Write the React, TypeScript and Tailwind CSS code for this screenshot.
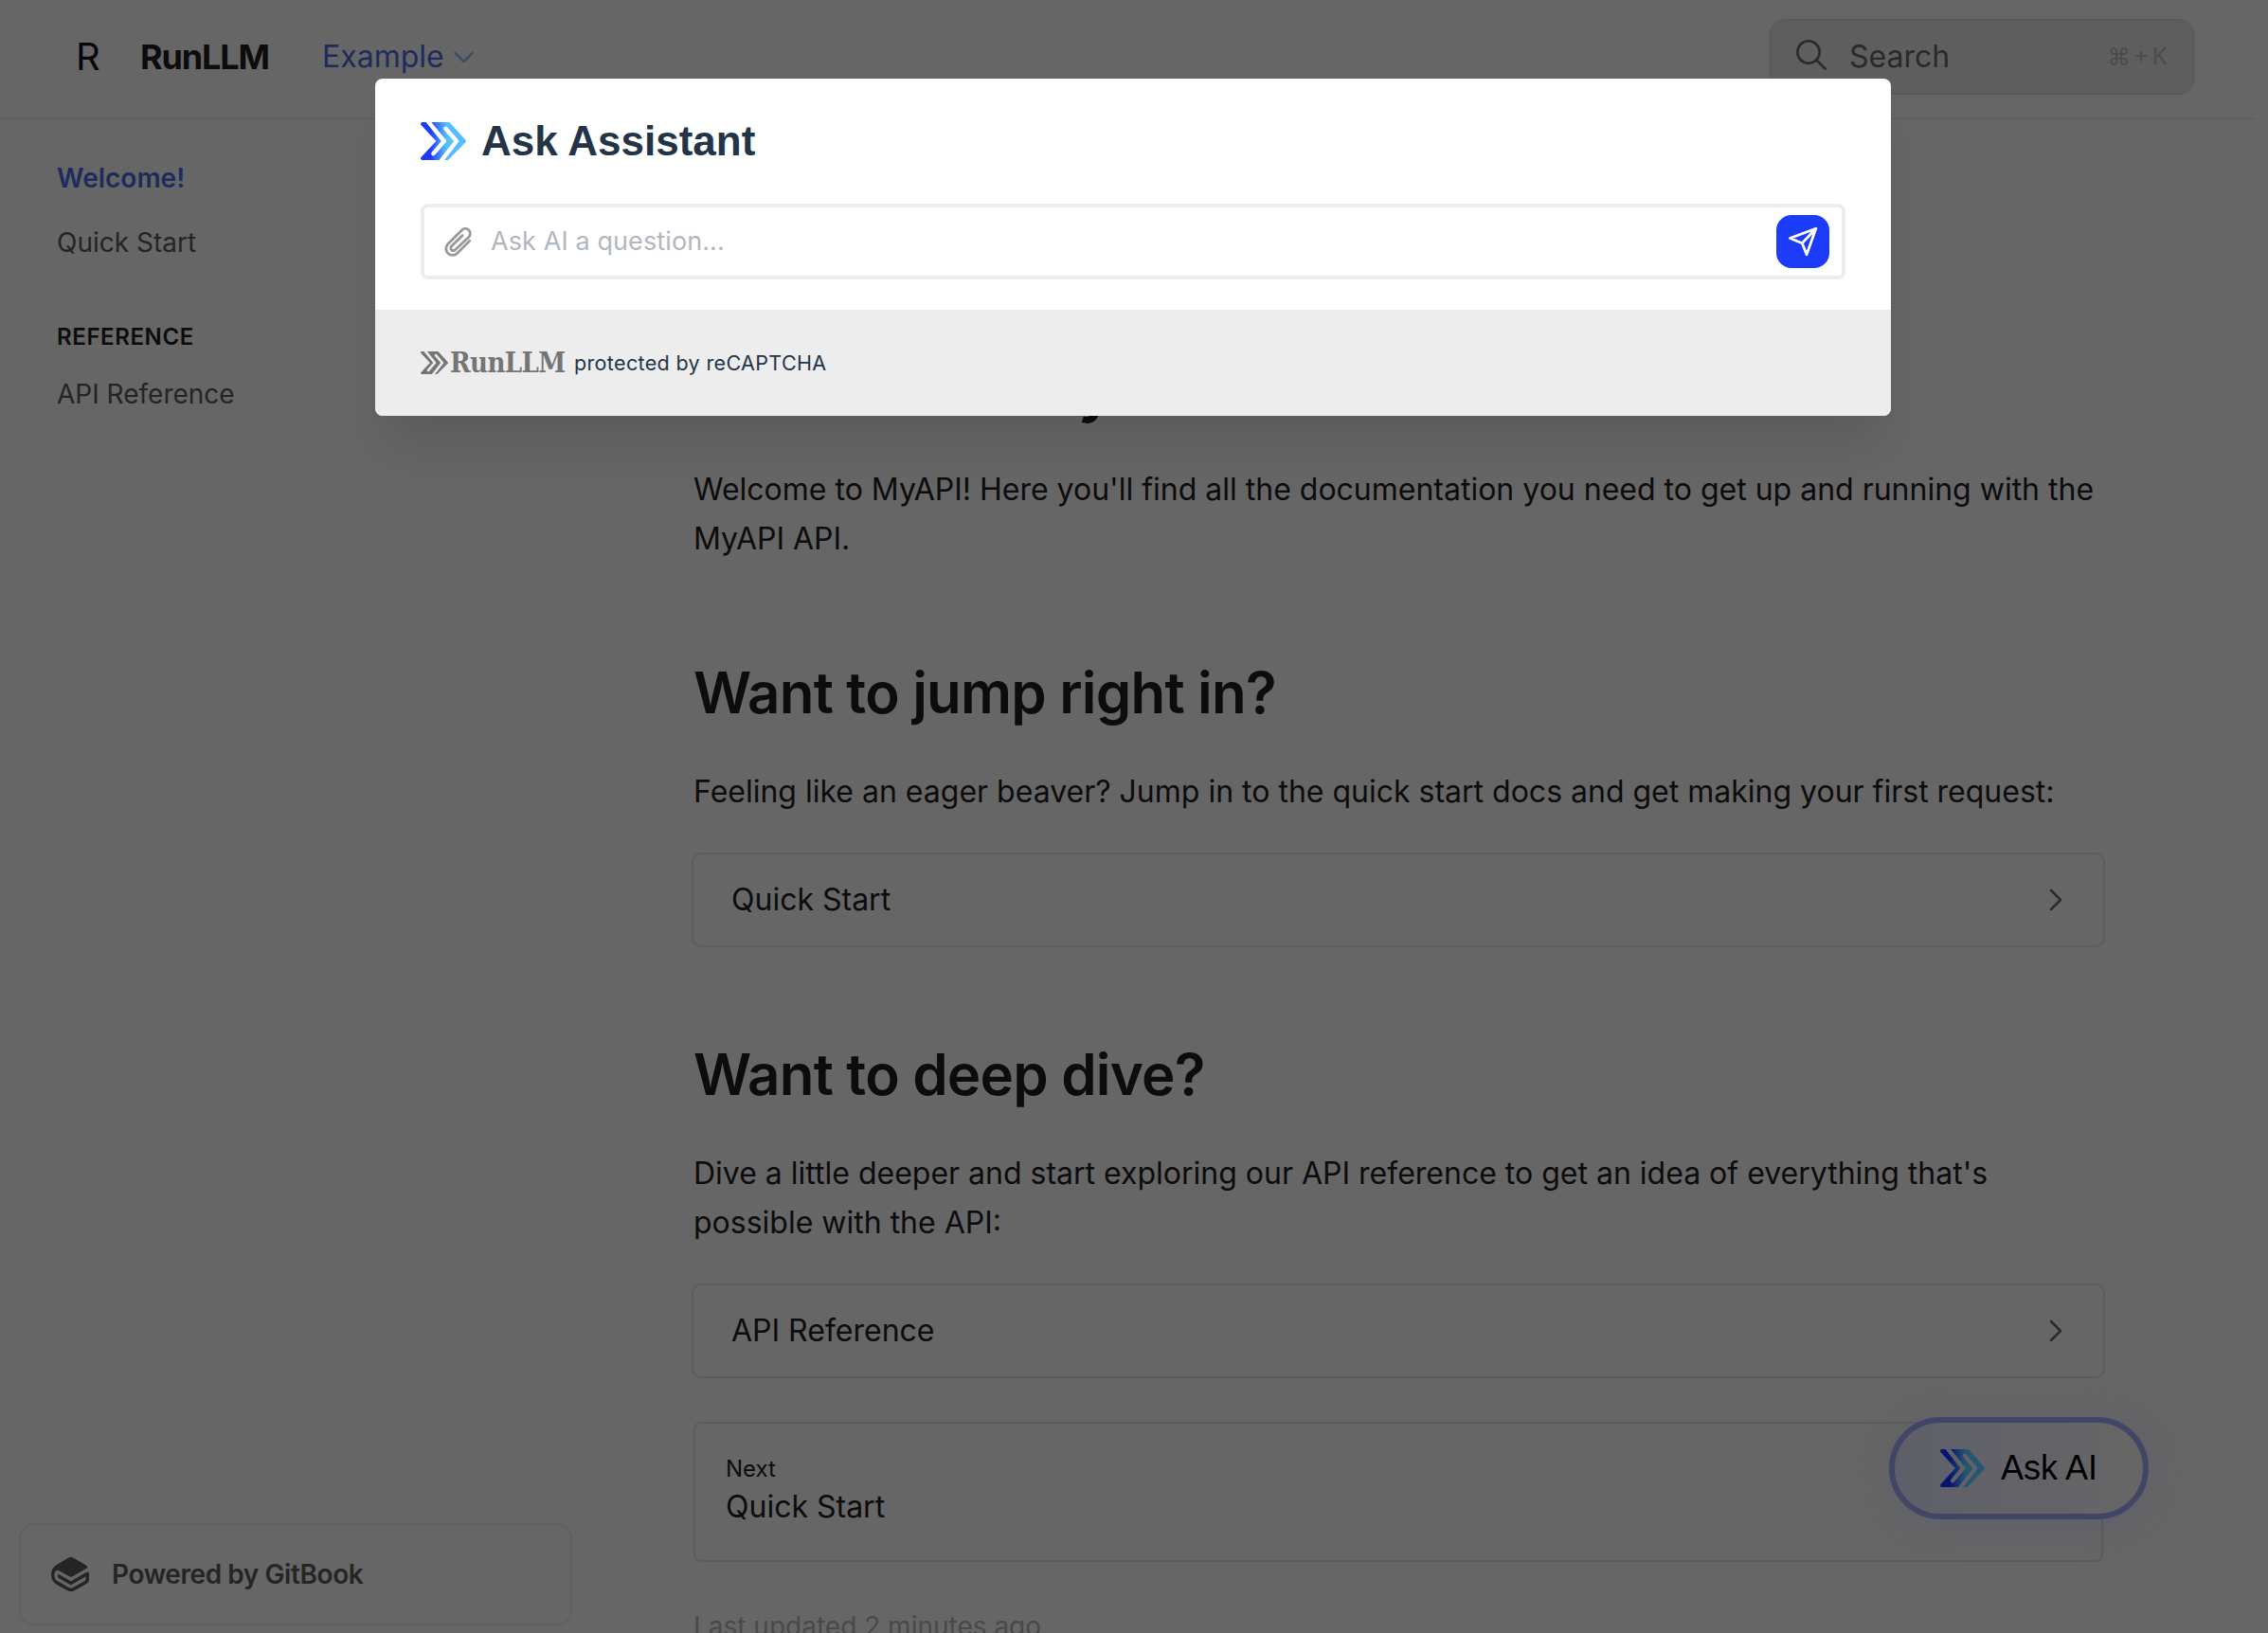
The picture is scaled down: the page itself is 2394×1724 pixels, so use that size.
import { ChevronDown, ChevronRight } from "lucide-react";
import { SiGitbook } from "react-icons/si";

type MarkProps = { className: string; from: string; to: string; id: string };

function Mark({ className, from, to, id }: MarkProps) {
  return (
    <svg className={className} viewBox="0 0 47.5 40" fill="none" preserveAspectRatio="none">
      <defs>
        <linearGradient id={id} x1="10" y1="0" x2="27" y2="0" gradientUnits="userSpaceOnUse">
          <stop stopColor={from} />
          <stop offset="1" stopColor={to} />
        </linearGradient>
        <mask id={`${id}-slots`} maskUnits="userSpaceOnUse" x="0" y="0" width="48" height="40">
          <rect width="48" height="40" fill="white" />
          <path
            d="M6 -3L24.500 20L13.300 33.200M26.300 6.800L37.500 20L19.800 43"
            stroke="black"
            strokeWidth="4.4"
            strokeLinecap="round"
            strokeLinejoin="round"
          />
        </mask>
      </defs>
      <path
        d="M1.800 1.800H29.300L45.600 20L27.800 38.200H1.800L18.600 20Z"
        fill={`url(#${id})`}
        stroke={`url(#${id})`}
        strokeWidth="3.6"
        strokeLinejoin="round"
        mask={`url(#${id}-slots)`}
      />
    </svg>
  );
}

function LinkCard({ label }: { label: string }) {
  return (
    <div className="-mx-0.5 flex h-[100px] w-[1492px] items-center justify-between rounded-[10px] border-2 border-[#5c5c5c] pr-[30px] pl-[40px]">
      <span className="text-[32px] leading-[52px]">{label}</span>
      <ChevronRight className="size-[40px] text-[#2b2b2b]" strokeWidth={1.5} />
    </div>
  );
}

export default function App() {
  return (
    <div className="relative h-[1724px] w-[2394px] overflow-hidden bg-[#666666] font-['Inter',sans-serif] text-[#0c0c0c]">
      <header className="flex h-[126px] w-[2380px] border-b-2 border-[#606060] pt-5">
        <div className="flex h-20 w-full items-center">
          <span className="ml-[80px] w-[68px] text-[40px] text-[#05060f]">R</span>
          <span className="w-[192px] text-[36px] font-bold tracking-[-1.15px]">RunLLM</span>
          <span className="text-[32px] text-[#1e2b5c]">Example</span>
          <ChevronDown className="ml-[2px] size-[37px] text-[#40486a]" strokeWidth={1.4} />
          <div className="mr-[64px] ml-auto flex h-20 w-[448px] items-center rounded-2xl border-2 border-[#5a5a5a] bg-[#5e5e5e] pr-[26px] pl-[26px] text-[#2a2a2a]">
            <svg className="-mt-1 size-8" viewBox="0 0 32 32" fill="none" stroke="currentColor" strokeWidth="2.6" strokeLinecap="round">
              <circle cx="13" cy="13" r="11.700" />
              <path d="M21.500 21.500L30.700 30.700" />
            </svg>
            <span className="ml-[24px] text-[32px]">Search</span>
            <span className="ml-auto text-[24px] [word-spacing:-3px] text-[#4b4b4b]">⌘ + K</span>
          </div>
        </div>
      </header>

      <div className="flex">
        <nav className="flex w-[732px] shrink-0 flex-col pl-[60px] text-[28px] leading-[40px] text-[#242424]">
          <span className="mt-[42px] font-semibold text-[#1e2b5c]">Welcome!</span>
          <span className="mt-[28px]">Quick Start</span>
          <span className="mt-[60px] text-[24px] font-semibold tracking-[0.6px] text-[#0c0c0c]">REFERENCE</span>
          <span className="mt-[20px]">API Reference</span>
        </nav>
        <main className="w-[1488px] text-[32px] leading-[52px]">
          <h1 className="mt-[250px] text-[60px] leading-[72px] font-bold tracking-[-0.9px]">Welcome to MyAPI</h1>
          <p className="mt-[43px]">
            Welcome to MyAPI! Here you'll find all the documentation you need to get up and running with the MyAPI API.
          </p>
          <h2 className="mt-[100px] text-[60px] leading-[72px] font-semibold tracking-[-0.8px]">Want to jump right in?</h2>
          <p className="mt-[43px] mb-[38px]">
            Feeling like an eager beaver? Jump in to the quick start docs and get making your first request:
          </p>
          <LinkCard label="Quick Start" />
          <h2 className="mt-[98px] text-[60px] leading-[72px] font-semibold tracking-[-0.8px]">Want to deep dive?</h2>
          <p className="mt-[43px] mb-[38px]">
            Dive a little deeper and start exploring our API reference to get an idea of everything that's possible with the API:
          </p>
          <LinkCard label="API Reference" />
          <div className="mt-[46px] flex h-[148px] w-[1488px] flex-col justify-center rounded-lg border-2 border-[#5c5c5c] pb-1 pl-8">
            <span className="text-[24px] leading-[36px]">Next</span>
            <span className="text-[32px] leading-[44px]">Quick Start</span>
          </div>
          <p className="mt-[42px] text-[28px] text-[#494949]">Last updated 2 minutes ago</p>
        </main>
      </div>

      <div className="absolute top-[1608px] left-[20px] flex h-[108px] w-[584px] items-center rounded-2xl border-2 border-[#606060] pl-8 text-[#252525]">
        <SiGitbook className="size-[40px]" />
        <span className="ml-[24px] text-[28px] font-semibold tracking-[-0.42px]">Powered by GitBook</span>
      </div>

      <div className="absolute top-[1496px] left-[1994px] flex h-[108px] w-[274px] items-center rounded-full border-[6px] border-[#424666] bg-linear-to-r from-[#5f5f69] to-[#666666] pl-[48px] shadow-[0_4px_40px_rgba(70,75,120,0.25)]">
        <Mark className="h-10 w-[47px]" id="mark-button" from="#07146e" to="#235670" />
        <span className="ml-[17px] font-['Liberation_Sans',sans-serif] text-[36px] text-black">Ask AI</span>
      </div>

      <section className="absolute top-[83px] left-[396px] h-[356px] w-[1600px] rounded-lg bg-white text-[#243447] shadow-[0_40px_50px_-10px_rgba(0,0,0,0.1)]">
        <div className="flex h-[244px] flex-col px-12 pt-10">
          <div className="flex h-[52px] items-center">
            <Mark className="h-10 w-12" id="mark-title" from="#1c3cf9" to="#55beff" />
            <h2 className="ml-[16px] font-['Liberation_Sans',sans-serif] text-[44px] leading-[52px] font-bold">Ask Assistant</h2>
          </div>
          <div className="mt-10 flex h-20 items-center rounded-lg border-4 border-[#ededed] pr-[13px] pl-[18px]">
            <svg
              className="size-[34px] text-[#999999]"
              viewBox="0 0 24 24"
              fill="none"
              stroke="currentColor"
              strokeWidth="2"
              strokeLinecap="round"
              strokeLinejoin="round"
            >
              <path d="m21 11.500-9.200 9.100a4.850 4.850 0 0 1-7.100-6.700L15.200 3.500A3.600 3.600 0 0 1 20.400 8.600L10.200 18.200a1.900 1.900 0 0 1-2.800-2.700l8.200-8" />
            </svg>
            <span className="ml-[18px] text-[27px] tracking-[0.1px] text-[#b0b7bf]">Ask AI a question...</span>
            <div className="ml-auto flex size-14 items-center justify-center rounded-2xl bg-[#1c3cf9]">
              <svg className="size-8" viewBox="0 0 32 32" fill="none" stroke="white" strokeWidth="2.8" strokeLinejoin="round">
                <path d="M29.800 2.200L2.500 12.500L15.300 17.700L20 29.800Z M29.800 2.200L15.300 17.700" />
              </svg>
            </div>
          </div>
        </div>
        <div className="flex h-[112px] items-center rounded-b-lg bg-[#ededed] px-12">
          <Mark className="h-6 w-[29px]" id="mark-footer" from="#757575" to="#757575" />
          <span className="ml-[2px] w-[131px] pt-0.5 font-['DejaVu_Serif_Condensed','DejaVu_Serif',serif] text-[29px] font-bold tracking-[-0.6px] text-[#757575] [font-stretch:condensed]">
            RunLLM
          </span>
          <span className="text-[21.5px] tracking-[0.35px]">protected by reCAPTCHA</span>
        </div>
      </section>
    </div>
  );
}
